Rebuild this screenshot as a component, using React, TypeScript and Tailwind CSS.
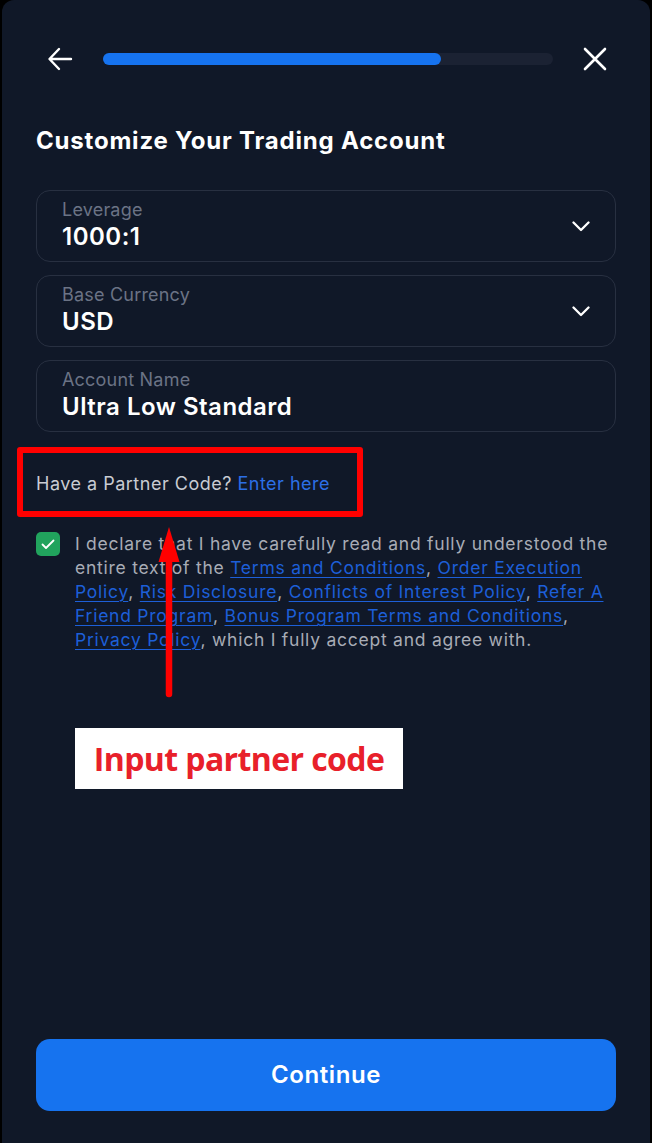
import React from "react";

const Field = ({ label, value, chevron }: { label: string; value: string; chevron?: boolean }) => (
  <div className="flex h-[72px] items-center justify-between rounded-[14px] border border-[#283041] pl-[25px] pr-[25px]">
    <div className="flex flex-col self-start pt-[8px]">
      <span className="text-[18px] leading-[22px] tracking-[0.2px] text-[#6b7385]">{label}</span>
      <span className="mt-[3px] text-[24px] font-semibold leading-[26px] tracking-[0.5px] text-white">{value}</span>
    </div>
    {chevron && (
      <svg width="18" height="11" viewBox="0 0 18 11" fill="none">
        <path d="M1.5 1.5L9 9L16.5 1.5" stroke="white" strokeWidth="2.3" strokeLinecap="round" strokeLinejoin="round" />
      </svg>
    )}
  </div>
);

const L = ({ children }: { children: React.ReactNode }) => (
  <span className="text-[#1d5fd8] underline decoration-[1px] underline-offset-[3px]">{children}</span>
);

export default function App() {
  return (
    <div className="h-[1143px] w-full bg-black px-[2px]" style={{ fontFamily: "Inter, 'Noto Sans', sans-serif" }}>
      <div className="relative flex h-full flex-col rounded-t-[12px] bg-[#101828] px-[34px]">
        {/* header */}
        <div className="mt-[47px] flex h-[24px] items-center">
          <div className="flex w-[48px] justify-center">
            <svg width="26" height="24" viewBox="0 0 26 24" fill="none">
              <path d="M24 12H3M12 2L2.5 12L12 22" stroke="white" strokeWidth="2.4" strokeLinecap="round" strokeLinejoin="round" />
            </svg>
          </div>
          <div className="ml-[19px] h-[12px] w-[450px] rounded-full bg-[#1b2233]">
            <div className="h-full w-[338px] rounded-full bg-[#1673ef]" />
          </div>
          <div className="ml-[30px] flex w-[24px] justify-center">
            <svg width="24" height="24" viewBox="0 0 24 24" fill="none">
              <path d="M2 2L22 22M22 2L2 22" stroke="white" strokeWidth="2.6" strokeLinecap="round" />
            </svg>
          </div>
        </div>

        <h1 className="mt-[55px] text-[24px] font-bold leading-[30px] tracking-[0.8px] text-white">
          Customize Your Trading Account
        </h1>

        <div className="mt-[34px] flex flex-col gap-[13px]">
          <Field label="Leverage" value="1000:1" chevron />
          <Field label="Base Currency" value="USD" chevron />
          <Field label="Account Name" value="Ultra Low Standard" />
        </div>

        <div className="relative mt-[40px]">
          <p className="text-[18px] leading-[24px] tracking-[0.5px] text-[#c9ccd3]">
            Have a Partner Code? <span className="text-[#2c6fe6]">Enter here</span>
          </p>
          <div className="absolute left-[-19px] top-[-25px] h-[70px] w-[346px] rounded-[3px] border-[6px] border-[#ff0000]" />
        </div>

        <div className="mt-[36px] flex gap-[15px]">
          <div className="flex h-[24px] w-[24px] shrink-0 items-center justify-center rounded-[5px] bg-[#21a35d]">
            <svg width="14" height="11" viewBox="0 0 14 11" fill="none">
              <path d="M1.5 5.5L5 9L12.5 1.5" stroke="white" strokeWidth="1.8" strokeLinecap="round" strokeLinejoin="round" />
            </svg>
          </div>
          <p className="whitespace-nowrap text-[17.5px] leading-[24px] tracking-[0.75px] text-[#a8acb6]">
            I declare that I have carefully read and fully understood the
            <br />
            entire text of the <L>Terms and Conditions</L>, <L>Order Execution</L>
            <br />
            <L>Policy</L>, <L>Risk Disclosure</L>, <L>Conflicts of Interest Policy</L>, <L>Refer A</L>
            <br />
            <L>Friend Program</L>, <L>Bonus Program Terms and Conditions</L>,
            <br />
            <L>Privacy Policy</L>, which I fully accept and agree with.
          </p>
        </div>

        {/* annotation arrow */}
        <svg className="absolute left-[154px] top-[524px]" width="28" height="176" viewBox="0 0 28 176" fill="none">
          <path d="M13 3L2.5 38H23.5Z" fill="#ff0000" />
          <path d="M13 30V170" stroke="#ff0000" strokeWidth="6.5" strokeLinecap="round" />
        </svg>

        {/* annotation label */}
        <div className="absolute left-[73px] top-[728px] flex h-[61px] w-[328px] items-center justify-center bg-white">
          <span
            className="text-[32px] font-bold tracking-[-0.6px] text-[#e8202a]"
            style={{ fontFamily: "'Open Sans', 'Noto Sans', sans-serif" }}
          >
            Input partner code
          </span>
        </div>

        <div className="mt-auto mb-[32px]">
          <button className="flex h-[72px] w-full items-center justify-center rounded-[14px] bg-[#1673ef] text-[24px] font-semibold tracking-[0.6px] text-white">
            Continue
          </button>
        </div>
      </div>
    </div>
  );
}
